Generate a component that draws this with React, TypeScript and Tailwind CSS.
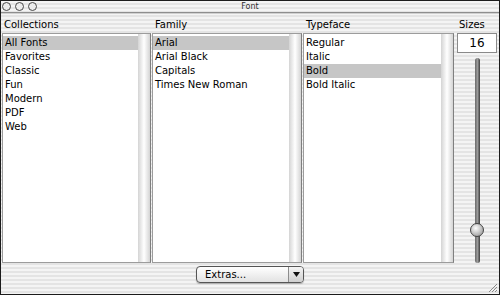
const stripes =
  "bg-[repeating-linear-gradient(to_bottom,#f4f4f4_0px,#f4f4f4_2px,#e4e4e4_2px,#e4e4e4_4px)]";

const collections = ["All Fonts", "Favorites", "Classic", "Fun", "Modern", "PDF", "Web"];
const families = ["Arial", "Arial Black", "Capitals", "Times New Roman"];
const typefaces = ["Regular", "Italic", "Bold", "Bold Italic"];

const ListPane = ({
  items,
  selected,
  width,
}: {
  items: string[];
  selected: number;
  width: string;
}) => (
  <div className={`${width} h-full flex bg-white border border-[#9c9c9c] border-r-[#7f7f7f]`}>
    <div className="flex-1 pt-[2px]">
      {items.map((item, i) => (
        <div
          key={item}
          className={`h-[14px] leading-[14px] pl-[2px] ${i === selected ? "bg-[#c6c6c6]" : ""}`}
        >
          {item}
        </div>
      ))}
    </div>
    <div className="w-[12px] h-full bg-gradient-to-r from-[#d4d4d4] via-white to-[#d4d4d4]"></div>
  </div>
);

const App = () => {
  return (
    <div
      className={`w-[500px] h-[295px] border border-[#1c1c1c] ${stripes} flex flex-col text-[10px] text-black relative overflow-hidden`}
      style={{ fontFamily: '"DejaVu Sans", Verdana, sans-serif' }}
    >
      {/* title bar */}
      <div className="h-[11px] relative flex items-center">
        <div className="flex gap-[4px] pl-[1px]">
          <div className="w-[9px] h-[9px] rounded-full border border-[#4a4a4a] bg-[#ececec]"></div>
          <div className="w-[9px] h-[9px] rounded-full border border-[#4a4a4a] bg-[#ececec]"></div>
          <div className="w-[9px] h-[9px] rounded-full border border-[#4a4a4a] bg-[#ececec]"></div>
        </div>
        <div className="absolute inset-0 flex items-center justify-center text-[8px] text-[#303030]">
          Font
        </div>
      </div>
      <div className="h-[1px] bg-[#8e8e8e]"></div>
      <div className="h-[1px] bg-[#d0d0d0]"></div>

      {/* column headers */}
      <div className="h-[19px] flex items-center pt-[1px]">
        <div className="w-[151px] pl-[3px]">Collections</div>
        <div className="w-[151px] pl-[3px]">Family</div>
        <div className="w-[155px] pl-[3px]">Typeface</div>
        <div className="pl-[1px]">Sizes</div>
      </div>

      {/* panes */}
      <div className="h-[230px] flex gap-[1px] pl-[1px]">
        <ListPane items={collections} selected={0} width="w-[149px]" />
        <ListPane items={families} selected={0} width="w-[150px]" />
        <ListPane items={typefaces} selected={2} width="w-[151px]" />
        <div className="w-[40px] ml-[2px] flex flex-col items-center">
          <div className="w-[40px] h-[20px] bg-white border border-[#8a8a8a] flex items-center justify-center text-[12px]">
            16
          </div>
          <div className="relative mt-[5px] flex-1 flex justify-center">
            <div className="w-[5px] h-full rounded-full bg-gradient-to-r from-[#6a6a6a] via-[#9a9a9a] to-[#3e3e3e]"></div>
            <div className="absolute top-[165px] left-1/2 -translate-x-1/2 w-[14px] h-[14px] rounded-full border border-[#444] bg-[radial-gradient(circle_at_40%_35%,#ffffff,#b8b8b8_60%,#8a8a8a)]"></div>
          </div>
        </div>
      </div>

      {/* bottom bar */}
      <div className="flex-1 relative">
        <div className="absolute left-[195px] top-[3px] w-[108px] h-[17px] rounded-[4px] border border-[#555] bg-gradient-to-b from-white to-[#e2e2e2] flex shadow-[0_1px_1px_rgba(0,0,0,0.25)]">
          <div className="flex-1 pl-[8px] leading-[15px]">Extras...</div>
          <div className="w-[15px] border-l border-[#8c8c8c] bg-gradient-to-b from-[#f4f4f4] to-[#cfcfcf] rounded-r-[3px] flex items-center justify-center">
            <svg width="7" height="5" viewBox="0 0 7 5">
              <path d="M0 0 L7 0 L3.5 5 Z" fill="#111" />
            </svg>
          </div>
        </div>
        <svg className="absolute right-[1px] bottom-[1px]" width="10" height="10" viewBox="0 0 10 10">
          <path d="M9 1 L1 9 M9 4 L4 9 M9 7 L7 9" stroke="#8a8a8a" strokeWidth="1" />
        </svg>
      </div>
    </div>
  );
};

export default App;
